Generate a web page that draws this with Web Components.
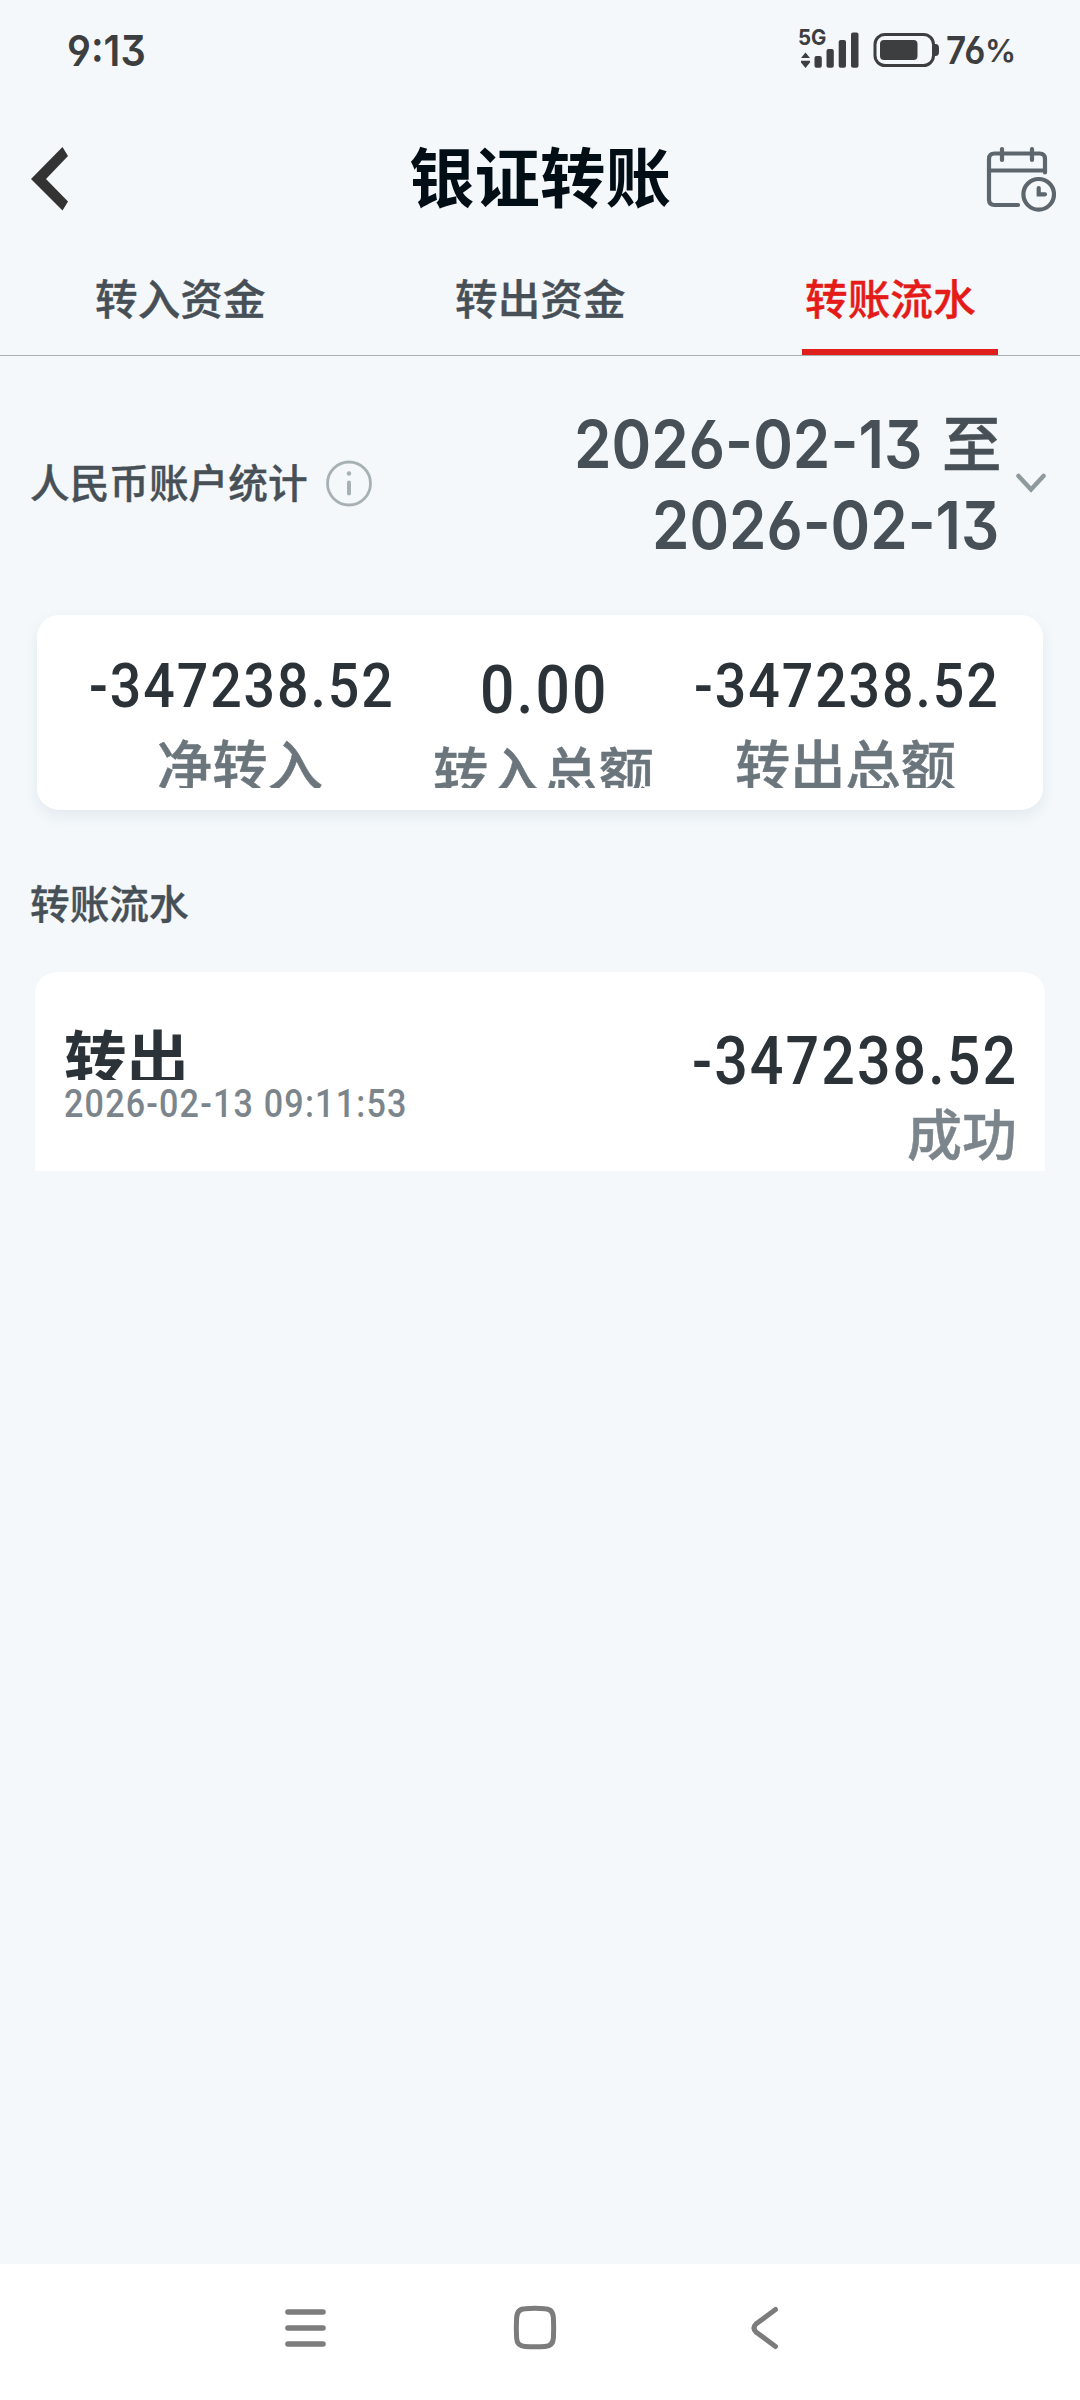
<!DOCTYPE html>
<html lang="zh-CN">
<head>
<meta charset="utf-8">
<title>银证转账</title>
<style>
html,body{margin:0;padding:0}
body{width:1080px;height:2400px;background:#f4f8fb;font-family:"Noto Sans CJK SC",sans-serif;overflow:hidden}
</style>
</head>
<body>
<transfer-app></transfer-app>
<script>
const define=(name,html)=>{
  const t=document.createElement('template');t.innerHTML=html;
  customElements.define(name,class extends HTMLElement{
    constructor(){super();this.attachShadow({mode:'open'}).appendChild(t.content.cloneNode(true));}
  });
};
const FACES={
  cjk:'"Noto Sans CJK SC",sans-serif',
  ui:'Inter,"Noto Sans CJK SC",sans-serif',
  num:'Roboto,"Noto Sans CJK SC",sans-serif'
};
const pen=document.createElement('canvas').getContext('2d');

/* One line of text whose visible ink spans exactly `w` pixels. */
customElements.define('fit-text',class extends HTMLElement{
  connectedCallback(){
    if(this.shadowRoot)return;
    const a=n=>this.getAttribute(n),w=+a('w'),size=+a('size'),weight=a('weight')||400,lh=a('lh'),kind=a('face')||'cjk';
    const face=FACES[kind],ls=kind==='num'?size*.035:0,text=this.textContent;
    pen.font=`${weight} ${size}px ${face}`;
    const m=pen.measureText(text);
    const ink=m.actualBoundingBoxLeft+m.actualBoundingBoxRight+ls*(text.length-1),k=w/ink;
    const stroke=kind==='cjk'&&weight==500?size*.009:0;
    this.attachShadow({mode:'open'}).innerHTML=`<style>
      :host{display:block;width:${w}px;height:${lh}px;flex:none}
      span{display:block;width:max-content;white-space:pre;font:${weight} ${size}px/${lh}px ${face};letter-spacing:${ls}px;
        -webkit-text-stroke:${stroke}px currentColor;
        font-feature-settings:"cv03","cv04","cv09";margin-left:${m.actualBoundingBoxLeft*k}px;transform-origin:0 50%;transform:scaleX(${k})}
    </style><span><slot></slot></span>`;
  }
});

define('status-bar',`<style>
:host{display:flex;height:100px;box-sizing:border-box;padding:0 66px 0 69px;align-items:center;color:#3d3e40}
.right{margin-left:auto;display:flex;align-items:center}
.net{display:flex;flex-direction:column;width:27px;height:40px}
.signal{margin-left:-13px}
svg{display:block}
.batt{margin:0 8px 0 14.5px}
.pct{padding-top:1px;margin-left:1px}
</style>
<fit-text face="ui" size="43" weight="600" w="77" lh="99">9:13</fit-text>
<div class="right">
 <div class="net"><fit-text face="ui" size="22" weight="700" w="27" lh="15">5G</fit-text>
  <svg width="14" height="24" viewBox="0 0 14 24"><path d="M6.500 7.500 11 13H2zM6.500 23 11 17.500v-1.800H2v1.800z" fill="currentColor"/></svg></div>
 <svg class="signal" width="46" height="36" viewBox="813 32 46 36" fill="currentColor"><rect x="814.500" y="56" width="7.300" height="11.700" rx="2"/><rect x="826.500" y="49" width="7.300" height="18.700" rx="2"/><rect x="838.700" y="40" width="7.300" height="27.700" rx="2"/><rect x="851" y="32.500" width="7.500" height="35.200" rx="2"/></svg>
 <svg class="batt" width="66" height="36" viewBox="873 32 66 36" fill="currentColor"><rect x="875" y="34.500" width="58.500" height="31" rx="10" fill="none" stroke="currentColor" stroke-width="3"/><rect x="880" y="40" width="37.500" height="20" rx="4"/><path d="M934 44h1.500q3.500 0 3.500 4v4q0 4-3.500 4H934z"/></svg>
 <fit-text face="ui" size="38" weight="600" w="40" lh="100">76</fit-text>
 <fit-text class="pct" face="ui" size="31" weight="600" w="26" lh="100">%</fit-text>
</div>`);

define('app-header',`<style>
:host{display:flex;justify-content:space-between;height:158px;align-items:center;color:#020e16;padding:0 24px 0 31px;box-sizing:border-box}
svg{display:block}
.t{margin-left:25px;padding-bottom:10px}
</style>
<svg width="38" height="64" viewBox="31 147 38 64"><path d="M31 179 62.500 147 68 156 46 179 68 201.500 62.500 210.500z" fill="#333"/></svg>
<div class="t"><slot></slot></div>
<svg width="70" height="66" viewBox="986 146 70 66" fill="none" stroke="#5d666c" stroke-width="4.200" stroke-linecap="round"><path d="M1045 172.500V159q0-5.500-5.500-5.500H994.500q-5.500 0-5.500 5.500V199.500q0 5.500 5.500 5.500H1018"/><path d="M990 170.500H1045" stroke-linecap="butt"/><path d="M1002 149V160M1032 149V160"/><circle cx="1038.700" cy="194.300" r="15.300"/><path d="M1038.700 188V194.300H1045"/></svg>`);

define('tab-bar',`<style>:host{display:flex;height:97px;border-bottom:1px solid #aaafb4}</style><slot></slot>`);
define('tab-item',`<style>
:host{flex:1;display:flex;flex-direction:column;align-items:center;justify-content:space-between;color:#475056}
:host([active]){color:#e41b18}
.box{width:196px;display:flex;justify-content:center}
:host([active]) .box{justify-content:flex-start;padding-left:4px;box-sizing:border-box}
i{display:none;width:196px;height:6px;background:#e01f1c}
:host([active]) i{display:block}
</style><div class="box"><slot></slot></div><i></i>`);

define('range-row',`<style>
:host{display:flex;height:259px;padding:0 34px 0 31px;box-sizing:border-box;align-items:center;color:#475056}
.info{margin-left:19px}
.dates{margin-left:auto;margin-top:-2px;display:flex;flex-direction:column;align-items:flex-end}
.l{display:flex;gap:23px}
.zhi{margin-top:-4px}
.title{margin-top:-10px}
.chev{margin-left:17px}
svg{display:block;margin-top:-5px}
</style>
<fit-text class="title" size="39.600" weight="500" w="276" lh="60">人民币账户统计</fit-text>
<svg class="info" width="46" height="47" viewBox="0 0 46 47" fill="none" stroke="#a7b1b5"><circle cx="23" cy="23.500" r="21.500" stroke-width="2.800"/><circle cx="23" cy="13.500" r="2.200" fill="#a7b1b5" stroke="none"/><path d="M23 22.500V33.500" stroke-width="4" stroke-linecap="round"/></svg>
<div class="dates">
 <div class="l"><fit-text face="ui" size="66" weight="600" w="344" lh="81">2026-02-13</fit-text><fit-text class="zhi" size="61" weight="500" w="54.500" lh="81">至</fit-text></div>
 <fit-text face="ui" size="66" weight="600" w="343" lh="81">2026-02-13</fit-text>
</div>
<svg class="chev" width="30" height="20" viewBox="0 0 30 20"><path d="M2.500 3 15 16.500 27.500 3" fill="none" stroke="#8f9a9e" stroke-width="4.500" stroke-linecap="round"/></svg>`);

define('stat-card',`<style>
:host{display:block;height:195px;margin:0 37px;background:#fff;border-radius:22px;box-shadow:0 6px 14px rgba(60,90,110,.09)}
.clip{height:173px;overflow:hidden;display:flex;padding:0 46px 0 52px}
</style><div class="clip"><slot></slot></div>`);
define('stat-cell',`<style>
:host{flex:1;display:flex;flex-direction:column;align-items:center;padding-top:35px;color:#2b3238}
.label{color:#6b757c}
</style><slot name="value"></slot><div class="label"><slot></slot></div>`);

define('section-title',`<style>:host{display:flex;height:162px;padding:21px 31px 0;box-sizing:border-box;align-items:center;color:#475056}</style><slot></slot>`);

define('record-card',`<style>
:host{display:flex;justify-content:space-between;height:199px;box-sizing:border-box;margin:0 35px;padding:44px 31px 0 30px;background:#fff;border-radius:22px 22px 0 0;color:#2b3238;overflow:hidden}
.type{height:64px;overflow:hidden}
.time,.state{color:#7b858b}
.right{display:flex;flex-direction:column;align-items:flex-end}
</style>
<div><div class="type"><slot name="type"></slot></div><div class="time"><slot name="time"></slot></div></div>
<div class="right"><slot name="amount"></slot><div class="state"><slot name="state"></slot></div></div>`);

define('nav-bar',`<style>:host{display:block;height:136px;background:#fff;margin-top:auto}
div{display:flex;justify-content:space-between;width:494px;margin-left:285px;padding-top:41px}svg{display:block}.home{margin-right:8px}</style>
<div><svg width="42" height="46" viewBox="285 2305 42 46"><path d="M288 2312H323M288 2328H323M288 2344H323" stroke="#7c7c7c" stroke-width="5.600" stroke-linecap="round"/></svg>
<svg class="home" width="44" height="46" viewBox="513 2305 44 46"><path d="M525 2308.700Q535 2308 545 2308.700Q553 2309 553.400 2318Q554 2328 553.400 2338Q553 2346 545 2346.500Q535 2347.200 525 2346.500Q517 2346 516.600 2338Q516 2328 516.600 2318Q517 2309 525 2308.700Z" fill="none" stroke="#7c7c7c" stroke-width="5"/></svg>
<svg width="28" height="46" viewBox="751 2305 28 46"><path d="M775.500 2309.500 756 2324Q752 2328 756 2332L775.500 2346.500" fill="none" stroke="#7c7c7c" stroke-width="5" stroke-linecap="round"/></svg></div>`);

define('transfer-app',`<style>:host{display:flex;flex-direction:column;width:1080px;height:2400px;background:#f4f8fb}
tab-bar,status-bar,app-header,range-row,stat-card,section-title,record-card{flex:none}</style>
<status-bar></status-bar>
<app-header><fit-text size="65" weight="700" w="260" lh="86">银证转账</fit-text></app-header>
<tab-bar>
 <tab-item><fit-text size="42.500" weight="500" w="169" lh="78">转入资金</fit-text></tab-item>
 <tab-item><fit-text size="42.500" weight="500" w="169" lh="78">转出资金</fit-text></tab-item>
 <tab-item active><fit-text size="42.500" weight="500" w="169" lh="78">转账流水</fit-text></tab-item>
</tab-bar>
<range-row></range-row>
<stat-card>
 <stat-cell><fit-text slot="value" face="num" size="62" weight="500" w="300" lh="72">-347238.52</fit-text><fit-text size="55" weight="500" w="163" lh="81">净转入</fit-text></stat-cell>
 <stat-cell><fit-text slot="value" face="num" size="67" weight="500" w="121" lh="80">0.00</fit-text><fit-text size="55" weight="500" w="219" lh="78">转入总额</fit-text></stat-cell>
 <stat-cell><fit-text slot="value" face="num" size="62" weight="500" w="300" lh="72">-347238.52</fit-text><fit-text size="55" weight="500" w="219" lh="81">转出总额</fit-text></stat-cell>
</stat-card>
<section-title><fit-text size="39.600" weight="500" w="157" lh="59">转账流水</fit-text></section-title>
<record-card>
 <fit-text slot="type" size="61" weight="700" w="119" lh="80">转出</fit-text>
 <fit-text slot="time" face="num" size="38" weight="500" w="340" lh="48">2026-02-13 09:11:53</fit-text>
 <fit-text slot="amount" face="num" size="66" weight="500" w="320" lh="91">-347238.52</fit-text>
 <fit-text slot="state" size="55" weight="500" w="106" lh="49">成功</fit-text>
</record-card>
<nav-bar></nav-bar>`);
</script>
</body>
</html>
